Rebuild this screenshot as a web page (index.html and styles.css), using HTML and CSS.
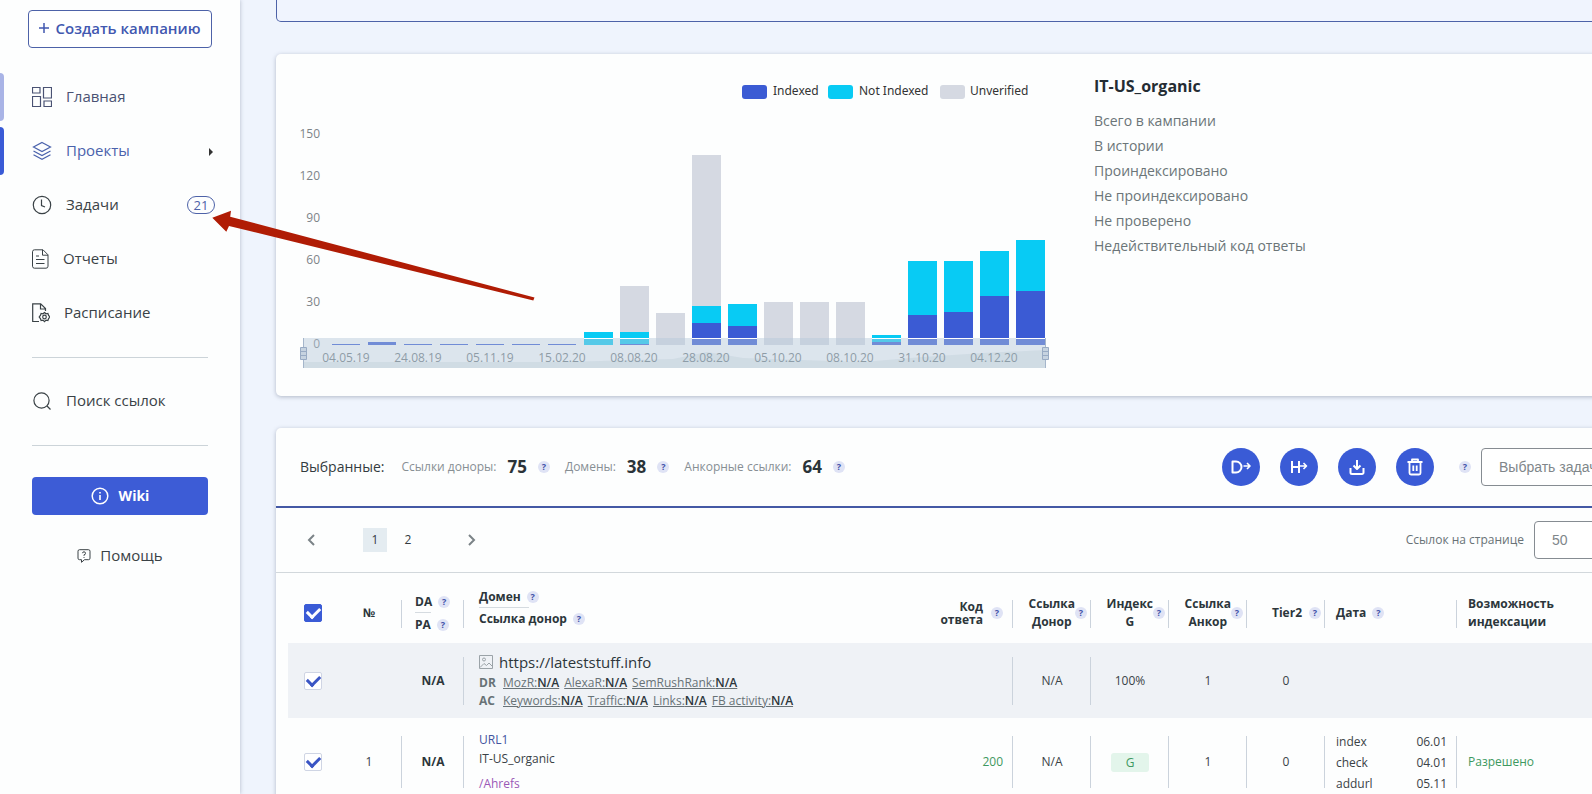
FILE: index.html
```html
<!DOCTYPE html>
<html lang="ru">
<head>
<meta charset="utf-8">
<title>IT-US_organic</title>
<link rel="stylesheet" href="styles.css">
</head>
<body>
<div class="app">
  <aside class="sidebar">
    <button class="create" type="button"><svg width="10" height="10" viewBox="0 0 10 10"><path d="M5 0v10M0 5h10" stroke="currentColor" stroke-width="1.5"/></svg>Создать кампанию</button>
    <nav class="nav">
      <a class="item soft" href="#"><svg class="icon" width="20" height="20" viewBox="0 0 20 20"><path d="M.5.5h7.500v5.500H.5zM11.500.5h8v10.500h-8zM.5 9.500h8v10H.5zM12 14h7.500v5.500H12z"/></svg><span class="label">Главная</span></a>
      <a class="item active" href="#"><svg class="icon" width="20" height="20" viewBox="0 0 20 20"><path d="M10 1.500l8.500 4.500-8.500 4.500L1.500 6zM1.500 10l8.500 4.500 8.500-4.500M1.500 13.700l8.500 4.500 8.500-4.500"/></svg><span class="label">Проекты</span><svg class="caret" width="4" height="8" viewBox="0 0 4 8"><path d="M0 0l4 4-4 4z"/></svg></a>
      <a class="item" href="#"><svg class="icon" width="20" height="20" viewBox="0 0 20 20"><circle cx="10" cy="10" r="8.700"/><path d="M9.500 4.500v6l3.500 1.500"/></svg><span class="label">Задачи</span><span class="count">21</span></a>
      <a class="item" href="#"><svg class="icon thin" width="17" height="20" viewBox="0 0 17 20"><path d="M2.500.8h8.500l5 5v11.400a2 2 0 0 1-2 2H2.500a2 2 0 0 1-2-2V2.800a2 2 0 0 1 2-2zM10.500 1v5.200H16M4 7h3M4 10.500h8.500M4 14.500h8.500"/></svg><span class="label">Отчеты</span></a>
      <a class="item" href="#"><svg class="icon" width="18" height="20" viewBox="0 0 18 20"><path d="M7 18.500H.7V.8h8l4.800 4.800V8M8.500 1v5H13"/><path d="M12.500 9.500l1.500 1.300 1.900-.3.700 1.900 1.200 1.600-1.200 1.600-.7 1.900-1.900-.3-1.500 1.500-1.500-1.500-1.900.3-.7-1.900L7.200 14l1.200-1.600.7-1.900 1.900.3z"/><circle cx="12.500" cy="14" r="1.800"/></svg><span class="label">Расписание</span></a>
    </nav>
    <hr class="rule">
    <a class="item search" href="#"><svg class="icon" width="20" height="20" viewBox="0 0 20 20"><circle cx="9.500" cy="9.500" r="7.600"/><path d="M15 15l3.500 3.500"/></svg><span class="label">Поиск ссылок</span></a>
    <hr class="rule">
    <button class="wiki" type="button"><svg class="icon" width="18" height="18" viewBox="0 0 18 18"><circle cx="9" cy="9" r="7.800" stroke-width="1.500"/><path d="M9 8v5M9 5v1.500" stroke-width="1.600"/></svg>Wiki</button>
    <a class="help" href="#"><svg class="icon" width="14" height="14" viewBox="0 0 14 14"><path d="M2.500.7h9a1.500 1.500 0 0 1 1.500 1.500v7a1.500 1.500 0 0 1-1.500 1.500H7.500L4.500 13.300v-2.600h-2A1.500 1.500 0 0 1 1 9.200v-7A1.500 1.500 0 0 1 2.500.7zM5.500 4.200a1.500 1.500 0 1 1 1.500 1.600v1M7 8v.9" stroke-width="1"/></svg><span class="label">Помощь</span></a>
  </aside>

  <main class="main">
    <section class="strip"></section>

    <section class="card overview">
      <svg class="chart" width="780" height="342" viewBox="276 54 780 342" role="img" aria-label="Indexed, Not Indexed, Unverified">
        <g class="legend">
          <rect x="742" y="85" width="25" height="14" rx="3" class="idx"/><text x="773" y="95">Indexed</text>
          <rect x="828" y="85" width="25" height="14" rx="3" class="not"/><text x="859" y="95">Not Indexed</text>
          <rect x="940" y="85" width="25" height="14" rx="3" class="unv"/><text x="970" y="95">Unverified</text>
        </g>
        <g class="yaxis">
          <text x="320" y="138">150</text><text x="320" y="180">120</text><text x="320" y="222">90</text>
          <text x="320" y="264">60</text><text x="320" y="306">30</text><text x="320" y="348">0</text>
        </g>
        <g class="unv">
          <rect x="620" y="286" width="29" height="46"/><rect x="656" y="313" width="29" height="32"/><rect x="692" y="155" width="29" height="151"/>
          <rect x="764" y="302" width="29" height="43"/><rect x="800" y="302" width="29" height="43"/><rect x="836" y="302" width="29" height="43"/>
        </g>
        <g class="not">
          <rect x="584" y="332" width="29" height="13"/><rect x="620" y="332" width="29" height="12"/><rect x="692" y="306" width="29" height="17"/>
          <rect x="728" y="304" width="29" height="22"/><rect x="872" y="335" width="29" height="7"/><rect x="908" y="261" width="29" height="54"/>
          <rect x="944" y="261" width="29" height="51"/><rect x="980" y="251" width="29" height="45"/><rect x="1016" y="240" width="29" height="51"/>
        </g>
        <g class="idx">
          <rect x="332" y="344" width="28" height="1"/><rect x="368" y="342" width="28" height="3"/><rect x="404" y="344" width="28" height="1"/>
          <rect x="440" y="344" width="28" height="1"/><rect x="476" y="344" width="28" height="1"/><rect x="512" y="344" width="28" height="1"/>
          <rect x="548" y="344" width="28" height="1"/><rect x="620" y="344" width="29" height="1"/><rect x="692" y="323" width="29" height="22"/>
          <rect x="728" y="326" width="29" height="19"/><rect x="872" y="342" width="29" height="3"/><rect x="908" y="315" width="29" height="30"/>
          <rect x="944" y="312" width="29" height="33"/><rect x="980" y="296" width="29" height="49"/><rect x="1016" y="291" width="29" height="54"/>
        </g>
        <g class="xaxis">
          <text x="346" y="362">04.05.19</text><text x="418" y="362">24.08.19</text><text x="490" y="362">05.11.19</text><text x="562" y="362">15.02.20</text>
          <text x="634" y="362">08.08.20</text><text x="706" y="362">28.08.20</text><text x="778" y="362">05.10.20</text><text x="850" y="362">08.10.20</text>
          <text x="922" y="362">31.10.20</text><text x="994" y="362">04.12.20</text>
        </g>
        <g class="zoom">
          <rect class="window" x="303" y="338" width="743" height="30"/>
          <path class="shadow" d="M303 362h260l110-3 34-7 36 6 120 4 60-5 60-4 63-3v18H303z"/>
          <path class="edge" d="M303.500 338v30M1045.500 338v30"/>
          <path class="top" d="M584 338.500h29M620 338.500h29M692 338.500h29M728 338.500h29M872 338.500h29M908 338.500h29M944 338.500h29M980 338.500h29M1016 338.500h29"/>
          <path class="grip" d="M300.500 347.500h6v12h-6zM1042.500 347.500h6v12h-6zM300.500 351.500h6M300.500 355.500h6M1042.500 351.500h6M1042.500 355.500h6"/>
        </g>
      </svg>
      <div class="summary">
        <h2>IT-US_organic</h2>
        <ul>
          <li>Всего в кампании</li><li>В истории</li><li>Проиндексировано</li><li>Не проиндексировано</li><li>Не проверено</li><li>Недействительный код ответы</li>
        </ul>
      </div>
    </section>

    <section class="card links">
      <header class="toolbar">
        <div class="stats">
          <span class="title">Выбранные:</span>
          <span class="stat">Ссылки доноры: <b>75</b> <i class="q">?</i></span>
          <span class="stat">Домены: <b>38</b> <i class="q">?</i></span>
          <span class="stat">Анкорные ссылки: <b>64</b> <i class="q">?</i></span>
        </div>
        <div class="actions">
          <button class="round" type="button" aria-label="Домены"><svg width="20" height="16" viewBox="0 0 20 16"><path d="M1.500 2.500v11h3.500a5.500 5.500 0 0 0 0-11z" stroke-width="2"/><path d="M12.500 7h6M16 4l3 3-3 3" stroke-width="1.600"/></svg></button>
          <button class="round" type="button" aria-label="Хосты"><svg width="18" height="16" viewBox="0 0 18 16"><path d="M2 2v12M9 2v12M2 8h7" stroke-width="2"/><path d="M10 7h6.500M13.500 4l3 3-3 3" stroke-width="1.600"/></svg></button>
          <button class="round" type="button" aria-label="Скачать"><svg width="18" height="18" viewBox="0 0 18 18"><path d="M2.500 10v4.500a1.500 1.500 0 0 0 1.500 1.500h10a1.500 1.500 0 0 0 1.500-1.500V10M9 2v9M5.500 7.500L9 11l3.500-3.500" stroke-width="2"/></svg></button>
          <button class="round" type="button" aria-label="Удалить"><svg width="18" height="18" viewBox="0 0 18 18"><path d="M1.500 4h15M6 4V1.500h6V4M3.500 4v11a1.500 1.500 0 0 0 1.500 1.500h8a1.500 1.500 0 0 0 1.500-1.500V4M7.300 7.500V13M10.700 7.500V13" stroke-width="1.800"/></svg></button>
        </div>
        <label class="q" for="task">?</label>
        <select class="field task" id="task"><option>Выбрать задачу</option></select>
      </header>

      <div class="pager">
        <button class="arrow" type="button" aria-label="Назад"><svg width="8" height="12" viewBox="0 0 8 12"><path d="M7 1L2 6l5 5"/></svg></button>
        <div class="pages"><button class="page current" type="button">1</button><button class="page" type="button">2</button></div>
        <button class="arrow" type="button" aria-label="Вперёд"><svg width="8" height="12" viewBox="0 0 8 12"><path d="M1 1l5 5-5 5"/></svg></button>
        <label class="perlabel" for="per">Ссылок на странице</label>
        <select class="field per" id="per"><option>50</option></select>
      </div>

      <table class="grid">
        <colgroup><col class="c-check"><col class="c-num"><col class="c-da"><col><col class="c-code"><col class="c-mid"><col class="c-mid"><col class="c-mid"><col class="c-mid"><col class="c-date"><col class="c-last"></colgroup>
        <thead>
          <tr>
            <th><input type="checkbox" class="check all" aria-label="Выбрать все" checked></th>
            <th class="center bar">№</th>
            <th class="bar"><div class="pair da"><span>DA <i class="q">?</i></span><span>PA <i class="q">?</i></span></div></th>
            <th><div class="pair domain"><span>Домен <i class="q">?</i></span><span>Ссылка донор <i class="q">?</i></span></div></th>
            <th class="bar"><div class="head code"><span>Код<br>ответа</span><i class="q">?</i></div></th>
            <th class="bar"><div class="head"><span>Ссылка<br>Донор</span><i class="q">?</i></div></th>
            <th class="bar"><div class="head"><span>Индекс<br>G</span><i class="q">?</i></div></th>
            <th class="bar"><div class="head"><span>Ссылка<br>Анкор</span><i class="q">?</i></div></th>
            <th class="bar"><div class="head tier"><span>Tier2</span><i class="q">?</i></div></th>
            <th class="bar"><div class="head date"><span>Дата</span><i class="q">?</i></div></th>
            <th><div class="head date"><span>Возможность<br>индексации</span></div></th>
          </tr>
        </thead>
        <tbody>
          <tr class="group">
            <td><input type="checkbox" class="check" aria-label="lateststuff.info" checked></td>
            <td></td>
            <td class="bar center strong">N/A</td>
            <td class="info">
              <div class="site"><svg width="14" height="14" viewBox="0 0 14 14"><path d="M.5.5h13v13H.5zM1 12.500l4-4 2.500 2L10 8l3.500 3.500"/><circle cx="5" cy="4.500" r="1.500"/></svg>https://lateststuff.info</div>
              <div class="metrics"><b>DR</b><a href="#">MozR:<em>N/A</em></a><a href="#">AlexaR:<em>N/A</em></a><a href="#">SemRushRank:<em>N/A</em></a></div>
              <div class="metrics"><b>AC</b><a href="#">Keywords:<em>N/A</em></a><a href="#">Traffic:<em>N/A</em></a><a href="#">Links:<em>N/A</em></a><a href="#">FB activity:<em>N/A</em></a></div>
            </td>
            <td class="bar"></td>
            <td class="bar center">N/A</td><td class="center">100%</td><td class="center">1</td><td class="center">0</td><td></td><td></td>
          </tr>
          <tr class="row">
            <td><input type="checkbox" class="check" aria-label="URL1" checked></td>
            <td class="bar center">1</td>
            <td class="bar center strong">N/A</td>
            <td class="info"><a class="url" href="#">URL1</a><span class="camp">IT-US_organic</span><a class="ahrefs" href="#">/Ahrefs</a></td>
            <td class="bar status">200</td>
            <td class="bar center">N/A</td>
            <td class="bar center"><span class="g">G</span></td>
            <td class="bar center">1</td>
            <td class="bar center">0</td>
            <td class="bar"><dl class="dates"><dt>index</dt><dd>06.01</dd><dt>check</dt><dd>04.01</dd><dt>addurl</dt><dd>05.11</dd></dl></td>
            <td class="allowed">Разрешено</td>
          </tr>
        </tbody>
      </table>
    </section>
  </main>

  <svg class="pointer" width="324" height="92" viewBox="212 210 324 92"><path d="M212.300 217.700L231 210.700l-.8 6L534.500 297.500l-1.200 3L229 226l-2.700 5.700z"/></svg>
</div>
</body>
</html>
```
FILE: styles.css
```css
* { box-sizing: border-box; }
body { margin: 0; background: #eff4fd; color: #3a4246; font: 14px/20px "Open Sans", "Noto Sans", sans-serif; }
a { color: inherit; text-decoration: none; }
button, select { font: inherit; cursor: pointer; }
.app { position: relative; display: flex; height: 100vh; overflow: hidden; }
.icon { fill: none; stroke: currentColor; stroke-width: 1.2; flex: none; }
.icon.thin { stroke-width: 1; }

.sidebar { width: 240px; flex: none; padding-top: 10px; background: #fdfefe; box-shadow: 0 0 4px rgba(60, 75, 100, .35); }
.create { display: flex; align-items: center; justify-content: center; gap: 6px; width: 184px; height: 38px; margin: 0 0 25px 28px; padding: 0 0 2px; border: 1px solid #4d62a8; border-radius: 4px; background: #fff; color: #4258b0; font-size: 15px; font-weight: 600; }
.nav { display: grid; gap: 6px; }
.item { position: relative; display: flex; align-items: center; gap: 14px; height: 48px; padding: 0 25px 0 32px; font-size: 15px; }
.label { padding-bottom: 2px; }
.item.soft::before, .item.active::before { content: ""; position: absolute; left: 0; top: 0; width: 4px; height: 48px; border-radius: 0 4px 4px 0; background: #a9b4e6; }
.item.active::before { background: #3a5bd6; }
.item.soft { color: #4a5273; }
.item.active { color: #4a62ac; }
.caret { margin: 2px 2px 0 auto; fill: #333; }
.count { display: flex; align-items: center; justify-content: center; width: 28px; height: 18px; margin-left: auto; border: 1px solid #4d62a8; border-radius: 9px; color: #4d62a8; font-size: 13px; }
.rule { height: 1px; margin: 20px 32px 0; border: 0; background: #ccd4d9; }
.search { margin-top: 19px; }
.wiki { display: flex; align-items: center; justify-content: center; gap: 10px; width: 176px; height: 38px; margin: 31px 32px 0; border: 0; border-radius: 4px; background: #3d5cd6; color: #fff; font-size: 14px; font-weight: 700; }
.help { display: flex; align-items: center; justify-content: center; gap: 9px; margin-top: 30px; font-size: 15px; }

.main { flex: 1; min-width: 0; padding-left: 36px; }
.strip, .card { margin-right: -80px; }
.strip { height: 22px; margin-bottom: 32px; border: 1px solid #4d62a8; border-top: 0; border-radius: 0 0 5px 5px; background: #f0f4fe; }
.card { background: #fdfefe; border-radius: 5px; box-shadow: 0 1px 4px rgba(60, 75, 100, .35); }
.overview { display: flex; gap: 38px; margin-bottom: 32px; }
.chart { flex: none; display: block; font-size: 12px; }
.legend text { fill: #333; font-family: "Noto Sans", sans-serif; }
.idx { fill: #3b5bd4; }
.not { fill: #08cbf4; }
.unv { fill: #d5d9e2; }
.yaxis text { fill: #7d8488; text-anchor: end; }
.xaxis text { fill: #70787c; text-anchor: middle; }
.zoom .window { fill: #b4c8da; fill-opacity: .45; }
.zoom .shadow { fill: #8fa5b5; fill-opacity: .15; }
.zoom .edge { stroke: #a5b6cb; }
.zoom .top { stroke: #fff; }
.zoom .grip { fill: #c6d3e0; stroke: #98abc4; }
.summary { padding-top: 20px; }
.summary h2 { margin: 0 0 10px; font-size: 16px; line-height: 24px; font-weight: 700; color: #242c33; }
.summary ul { margin: 0; padding: 0; list-style: none; line-height: 25px; color: #6b7578; }

.q { display: inline-flex; align-items: center; justify-content: center; flex: none; width: 12px; height: 12px; border-radius: 50%; background: #dfe3f5; color: #3f52a8; font-size: 9px; line-height: 12px; font-style: normal; font-weight: 700; }
.toolbar { display: flex; align-items: center; height: 80px; padding: 0 20px 0 24px; border-bottom: 2px solid #4459a5; }
.stats { display: flex; align-items: center; gap: 15px; margin-right: auto; }
.title { margin-right: 2px; color: #333b40; }
.stat { display: flex; align-items: center; gap: 11px; color: #878f94; font-size: 12px; }
.stat b { color: #2a3338; font-size: 17px; }
.actions { display: flex; gap: 20px; margin-right: 25px; }
.round { display: grid; place-items: center; width: 38px; height: 38px; padding: 0; border: 0; border-radius: 50%; background: #3a5bd6; }
.round svg { fill: none; stroke: #fff; stroke-linejoin: round; }
.field { appearance: none; height: 38px; padding: 0 17px; border: 1px solid #868c92; border-radius: 4px; background: #fff; color: #80868a; font-family: "Liberation Sans", sans-serif; font-size: 14px; }
.task { width: 171px; margin-left: 10px; }
.per { width: 118px; margin-left: 10px; }
.pager { display: flex; align-items: center; height: 65px; padding: 0 20px 0 23px; border-bottom: 1px solid #d2d8dc; }
.arrow { display: grid; place-items: center; width: 24px; height: 24px; padding: 0; border: 0; background: none; }
.arrow svg { fill: none; stroke: #7b8387; stroke-width: 2; }
.pages { display: flex; gap: 9px; margin: 0 40px; }
.page { width: 24px; height: 24px; padding: 0; border: 0; background: none; color: #333b40; font-size: 12px; }
.page.current { background: #e4ecf1; }
.perlabel { margin-left: auto; color: #687276; font-size: 12px; }

.grid { width: calc(100% - 24px); margin: 0 12px; table-layout: fixed; border-collapse: collapse; font-size: 12px; line-height: 18px; }
.c-check { width: 48px; } .c-num { width: 66px; } .c-da { width: 62px; } .c-code { width: 100px; }
.c-mid { width: 78px; } .c-date { width: 132px; } .c-last { width: 203px; }
th, td { padding: 0; text-align: left; }
th { height: 70px; padding-top: 10px; color: #2c363b; font-weight: 700; }
.center { text-align: center; }
.bar { background: linear-gradient(#cbd3dc, #cbd3dc) right center / 1px 48px no-repeat; }
th.bar { background-position: right 27px; background-size: 1px 28px; }
.row .bar { background-size: 1px 52px; }
.group { height: 75px; background: #eff2f6; }
.row td { height: 88px; }
.check { appearance: none; display: grid; place-items: center; width: 18px; height: 18px; margin: 0 0 0 16px; border: 1px solid #cfd5e4; border-radius: 2px; background: #fff; color: #3a55c4; }
.check::before { content: ""; width: 10px; height: 6px; margin-top: -3px; border: solid currentColor; border-width: 0 0 3px 3px; transform: rotate(-45deg); }
.check.all { border-color: #3a5bd6; background: #3a5bd6; color: #fff; }
.pair { display: grid; justify-items: start; line-height: 22px; }
.pair span { display: flex; align-items: center; gap: 6px; }
.pair.da { padding-left: 13px; line-height: 23px; }
.pair.domain { padding: 0 0 10px 15px; }
.pair span:first-child { background: linear-gradient(#d5dbe0, #d5dbe0) left bottom / 50px 1px no-repeat; }
.pair.da span:first-child { background-size: 16px 1px; }
.head { display: flex; align-items: center; justify-content: flex-end; padding-right: 4px; text-align: center; }
.head.code { gap: 8px; padding-right: 10px; line-height: 13px; text-align: right; }
.head.tier { gap: 7px; }
.head.date { justify-content: flex-start; gap: 6px; padding-left: 11px; text-align: left; }
.strong { color: #2c363b; font-weight: 700; }
.info { padding-left: 15px; }
.site { display: flex; align-items: center; gap: 6px; margin-bottom: 2px; color: #2c363b; font-size: 15px; line-height: 20px; }
.site svg { fill: none; stroke: #9ba3a8; }
.metrics { display: flex; gap: 5px; color: #687276; }
.metrics b { width: 19px; }
.metrics a { text-decoration: underline; }
.metrics em { color: #2c363b; font-style: normal; font-weight: 600; }
.info > a, .camp { display: block; }
.url { color: #43549f; }
.camp { margin: 1px 0 7px; }
.ahrefs { color: #9b59b6; }
.status { padding-right: 10px; color: #3d9960; text-align: right; }
.g { display: inline-block; width: 38px; line-height: 19px; border-radius: 3px; background: #e3f5eb; color: #3d9960; }
.dates { display: grid; grid-template-columns: 1fr auto; margin: 0; padding: 0 10px 0 11px; line-height: 21px; }
.dates dd { margin: 0; }
.allowed { padding-left: 11px; color: #3d9960; }
.pointer { position: absolute; left: 212px; top: 210px; fill: #b01c05; pointer-events: none; }
```
